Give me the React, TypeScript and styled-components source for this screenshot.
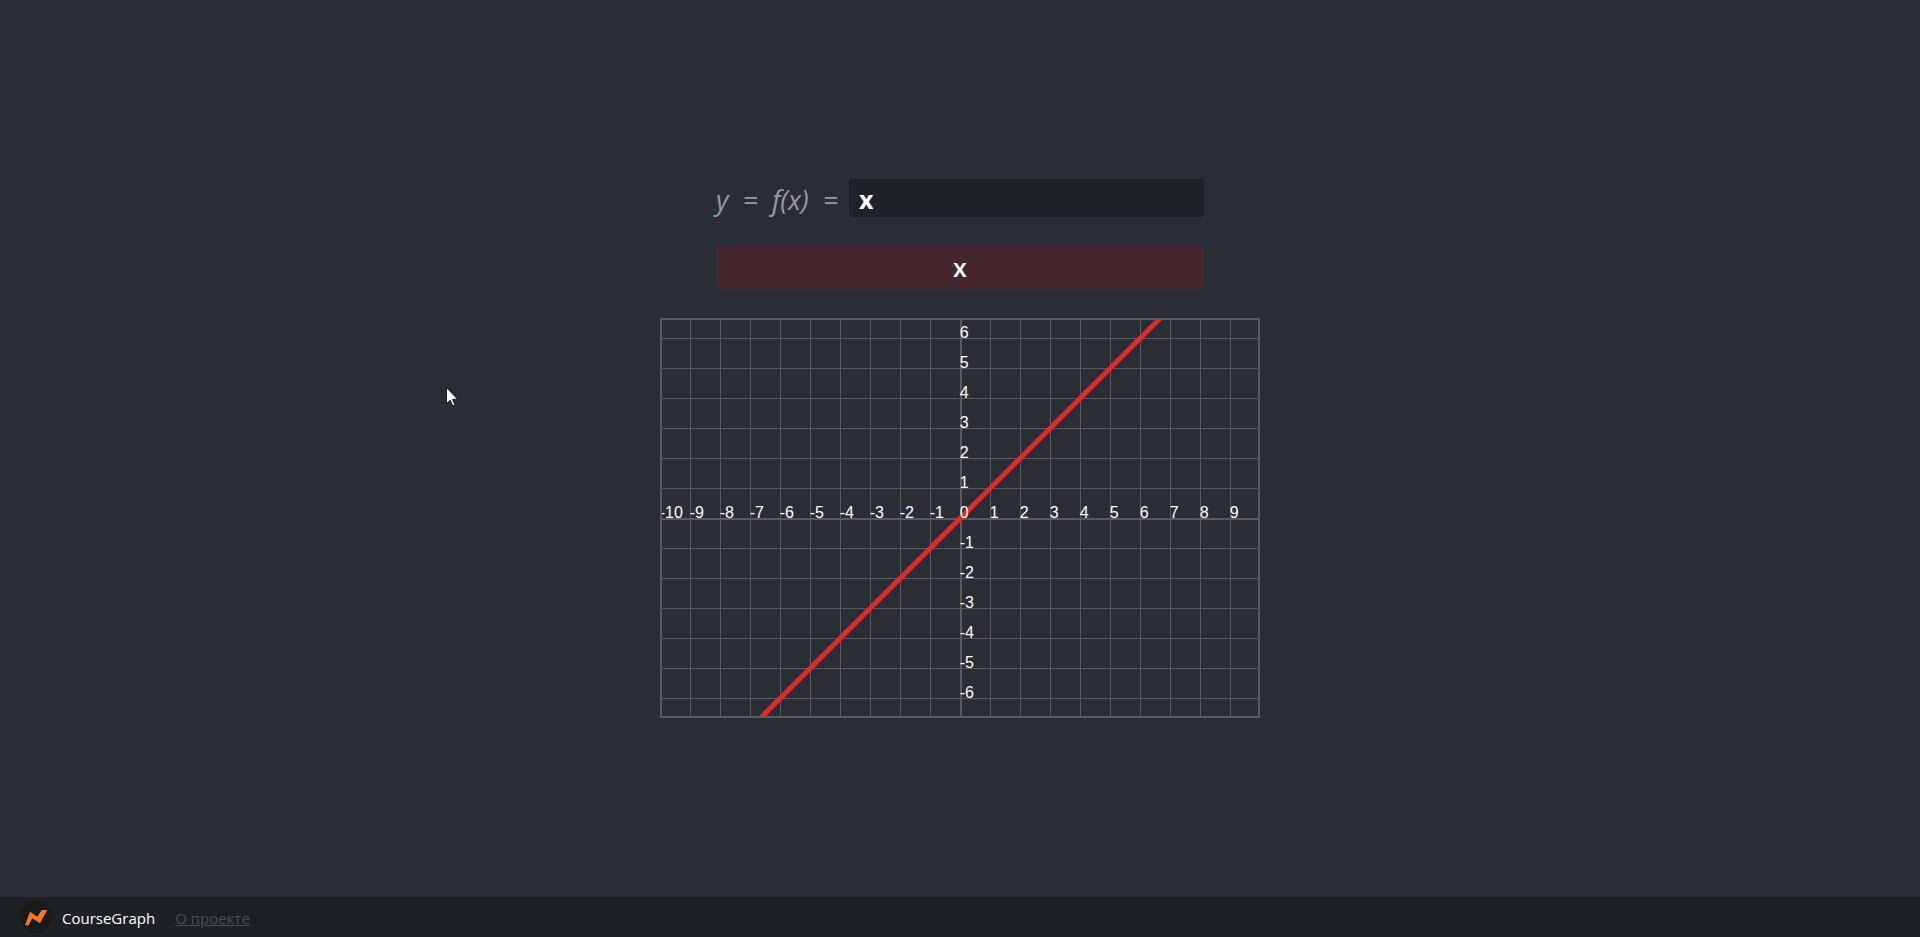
import styled, { createGlobalStyle } from "styled-components";

const GlobalStyle = createGlobalStyle`
  html, body {
    margin: 0;
    padding: 0;
    height: 100%;
    background: #2a2d36;
    font-family: "Open Sans", "Liberation Sans", sans-serif;
  }
`

const Page = styled.div`
  position: relative;
  height: 937px;
  overflow: hidden;
  display: flex;
  flex-direction: column;
`

const Main = styled.main`
  flex: 1;
  display: flex;
  flex-direction: column;
  align-items: center;
  padding-top: 179px;
`

const Form = styled.div`
  width: 488px;
  display: flex;
  flex-direction: column;
  gap: 29px;
`

const FormulaRow = styled.div`
  display: flex;
  align-items: center;
  justify-content: space-between;
  height: 38px;
`

const Formula = styled.span`
  font-size: 27px;
  font-style: italic;
  color: #999a9c;
  white-space: pre;
  word-spacing: 7px;
  line-height: 38px;
  position: relative;
  top: 2px;
`

const FormulaInput = styled.input`
  width: 355px;
  height: 38px;
  box-sizing: border-box;
  padding: 2px 10px 0;
  border: 0;
  border-radius: 4px;
  background: #1e2126;
  color: #fff;
  font-family: inherit;
  font-size: 25px;
  font-weight: 700;
  outline: none;
`

const PlotButton = styled.button`
  height: 43px;
  border: 0;
  border-radius: 4px;
  background: #45262d;
  color: #fff;
  font-family: inherit;
  font-size: 25px;
  font-weight: 600;
  line-height: 40px;
  padding: 0 0 2px;
`

const ChartBox = styled.svg`
  display: block;
  margin-top: 29px;
  flex-shrink: 0;
`

const Label = styled.text`
  fill: #fff;
  font-family: "Liberation Sans", Arial, sans-serif;
  font-size: 16px;
`

const Footer = styled.footer`
  height: 40px;
  background: #1d2024;
  display: flex;
  align-items: center;
  padding-left: 20px;
`

const Logo = styled.svg`
  display: block;
  margin-right: 10px;
`

const Brand = styled.span`
  color: #fff;
  font-size: 15px;
  margin-right: 20px;
  position: relative;
  top: 1px;
`

const AboutLink = styled.a`
  color: #4a4c50;
  font-size: 15px;
  text-decoration: underline;
  position: relative;
  top: 1px;
`

const Cursor = styled.svg`
  position: absolute;
  left: 446px;
  top: 387px;
`

const xTicks = Array.from({ length: 20 }, (_, i) => i - 10)
const yTicks = Array.from({ length: 13 }, (_, i) => 6 - i)

const Chart = () => (
    <ChartBox width={600} height={400} viewBox="0 0 600 400">
        <g stroke="#5a5a5a" strokeWidth={1}>
            {xTicks.map((t) => (
                <line key={t} x1={300.5 + t * 30} x2={300.5 + t * 30} y1={0} y2={400} />
            ))}
            {yTicks.map((t) => (
                <line key={t} x1={0} x2={600} y1={200.5 - t * 30} y2={200.5 - t * 30} />
            ))}
            <line x1={0} x2={600} y1={201} y2={201} strokeWidth={2} />
            <line x1={301} x2={301} y1={0} y2={400} strokeWidth={2} />
        </g>
        <line x1={100.5} y1={400} x2={500.5} y2={0} stroke="#e22a2a" strokeWidth={5} />
        {xTicks.map((t) => (
            <Label key={t} x={299.7 + t * 30} y={200}>{t}</Label>
        ))}
        {yTicks.filter((t) => t !== 0).map((t) => (
            <Label key={t} x={299.7} y={200 - t * 30}>{t}</Label>
        ))}
        <rect x={1} y={1} width={598} height={398} fill="none" stroke="#5a5a5a" strokeWidth={2} />
    </ChartBox>
)

const App = () => (
    <Page>
        <GlobalStyle />
        <Main>
            <Form>
                <FormulaRow>
                    <Formula>y = f(x) =</Formula>
                    <FormulaInput defaultValue="x" />
                </FormulaRow>
                <PlotButton>x</PlotButton>
            </Form>
            <Chart />
        </Main>
        <Footer>
            <Logo width={32} height={32} viewBox="0 0 32 32">
                <circle cx={16} cy={16} r={16} fill="#1a1a1b" />
                <path d="M5 24 L10 10.7 L17.3 15.7 L21.7 9 L27.3 9 L20 22.3 L12.3 17.3 L8.3 24.7 Z" fill="#f4781f" />
            </Logo>
            <Brand>CourseGraph</Brand>
            <AboutLink href="#">О проекте</AboutLink>
        </Footer>
        <Cursor width={13} height={20} viewBox="0 0 13 20">
            <path d="M0.5 0.5 L0.5 16.5 L4.2 13.2 L6.8 19 L9 18 L6.5 12.4 L11.5 12.2 Z" fill="#fff" stroke="#000" strokeWidth={0.8} />
        </Cursor>
    </Page>
)

export default App;
